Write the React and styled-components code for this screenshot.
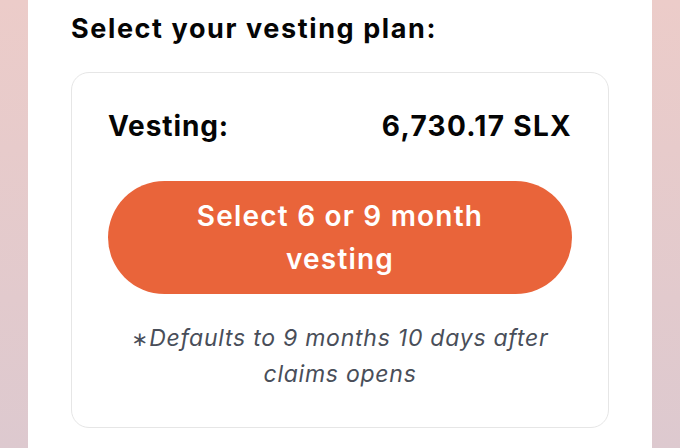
import React from "react";
import styled, { createGlobalStyle } from "styled-components";

const GlobalStyle = createGlobalStyle`
  html, body {
    margin: 0;
    padding: 0;
    height: 100%;
  }
  body {
    font-family: Inter, "Liberation Sans", Arial, sans-serif;
    background: linear-gradient(180deg, #ecccc9 0%, #ddc9cf 100%);
  }
`;

const Page = styled.div`
  width: 680px;
  height: 448px;
  display: flex;
  justify-content: center;
  overflow: hidden;
`;

const Panel = styled.div`
  width: 624px;
  height: 100%;
  background: #fff;
  box-sizing: border-box;
  padding: 12px 43px 0 43px;
`;

const Heading = styled.h2`
  margin: 0 0 26px 0;
  font-size: 27px;
  font-weight: 700;
  color: #050505;
  line-height: 34px;
  letter-spacing: 1.6px;
`;

const Card = styled.div`
  border: 1.5px solid #e6e6e6;
  border-radius: 18px;
  padding: 36px 36px 35px 36px;
`;

const Row = styled.div`
  display: flex;
  justify-content: space-between;
  align-items: center;
  font-size: 28px;
  font-weight: 700;
  color: #050505;
  letter-spacing: 1.3px;
`;

const Label = styled.span`
  letter-spacing: 0.9px;
`;

const Button = styled.button`
  display: block;
  width: 100%;
  height: 113px;
  margin-top: 38px;
  border: none;
  border-radius: 57px;
  background: #e9643a;
  color: #fff;
  font-family: Inter, "Liberation Sans", Arial, sans-serif;
  font-size: 28px;
  font-weight: 600;
  line-height: 43px;
  letter-spacing: 1.2px;
  padding: 0 70px;
`;

const Note = styled.p`
  margin: 27px 0 0 0;
  padding: 0 16px;
  text-align: center;
  font-family: Inter, "Liberation Sans", sans-serif;
  font-style: italic;
  font-size: 23px;
  line-height: 35px;
  letter-spacing: 0.75px;
  color: #494e59;
`;

const Star = styled.span`
  font-style: normal;
  font-family: "DejaVu Sans", sans-serif;
  font-size: 20px;
`;

export default function App() {
  return (
    <>
      <GlobalStyle />
      <Page>
        <Panel>
          <Heading>Select your vesting plan:</Heading>
          <Card>
            <Row>
              <Label>Vesting:</Label>
              <span>6,730.17 SLX</span>
            </Row>
            <Button>Select 6 or 9 month vesting</Button>
            <Note>
              <Star>∗</Star>Defaults to 9 months 10 days after claims opens
            </Note>
          </Card>
        </Panel>
      </Page>
    </>
  );
}
